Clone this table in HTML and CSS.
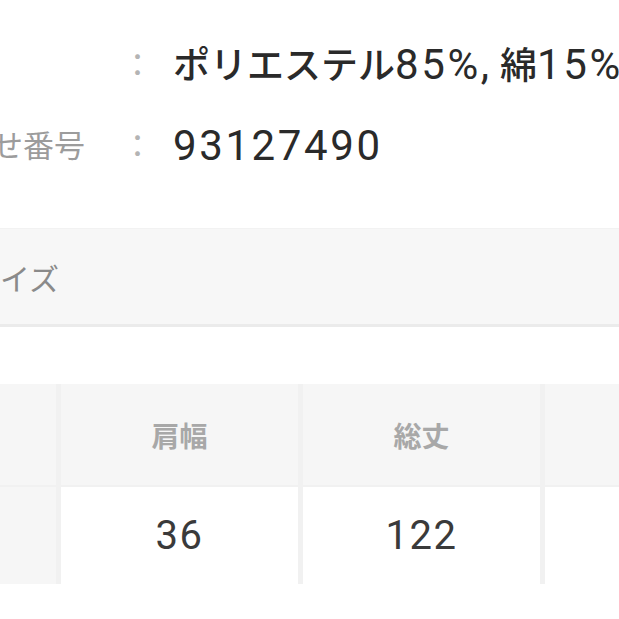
FILE: index.html
```html
<!DOCTYPE html>
<html lang="ja">
<head>
<meta charset="utf-8">
<title>商品詳細</title>
<link rel="stylesheet" href="styles.css">
</head>
<body>
<div class="page">
  <dl class="spec">
    <dt class="spec-label">素材</dt>
    <dd class="spec-colon">：</dd>
    <dd class="spec-value">ポリエステル<span class="num">85%,</span> 綿<span class="num">15%</span></dd>
    <dt class="spec-label">問い合わせ番号</dt>
    <dd class="spec-colon">：</dd>
    <dd class="spec-value"><span class="num">93127490</span></dd>
  </dl>

  <div class="size-head">サイズ</div>

  <div class="size-table">
    <div class="cell head"></div>
    <div class="cell head">肩幅</div>
    <div class="cell head">総丈</div>
    <div class="cell head">身幅</div>
    <div class="cell side"></div>
    <div class="cell val">36</div>
    <div class="cell val">122</div>
    <div class="cell val">50</div>
  </div>
</div>
</body>
</html>
```

FILE: styles.css
```css
html, body {
  margin: 0;
  padding: 0;
  background: #ffffff;
  overflow: hidden;
}

body {
  font-family: "Noto Sans CJK JP", sans-serif;
  color: #333333;
}

.page {
  width: 1000px;
  margin-left: -132px;
}

.spec {
  display: grid;
  grid-template-columns: 254px 51px 1fr;
  grid-auto-rows: 81px;
  align-items: center;
  margin: 0;
  padding-top: 22px;
}

.spec dt,
.spec dd {
  margin: 0;
  white-space: nowrap;
}

.spec-label {
  font-size: 31px;
  color: #9c9c9c;
}

.spec-colon {
  font-size: 31px;
  color: #b4b4b4;
}

.spec-value {
  font-size: 37px;
  font-weight: 500;
  color: #2a2a2a;
}

.num {
  font-family: Roboto, "Liberation Sans", sans-serif;
  font-size: 42px;
  font-weight: 400;
  letter-spacing: 2.6px;
}

.size-head {
  margin-top: 44px;
  height: 95px;
  display: flex;
  align-items: center;
  padding-left: 102px;
  background: #f7f7f7;
  border-top: 1px solid #f2f2f2;
  border-bottom: 3px solid #ebebeb;
  font-size: 30px;
  color: #8a8a8a;
}

.size-table {
  margin-top: 57px;
  display: grid;
  grid-template-columns: 188px 237px 237px 237px;
  grid-template-rows: 101px 97px;
  column-gap: 5px;
  row-gap: 2px;
  background: #f1f1f1;
}

.cell {
  display: flex;
  align-items: center;
  justify-content: center;
}

.head {
  background: #f6f6f6;
  font-size: 28px;
  font-weight: 700;
  color: #a8a8a8;
}

.side {
  background: #f6f6f6;
}

.val {
  background: #ffffff;
  font-family: Roboto, "Liberation Sans", sans-serif;
  font-size: 40px;
  letter-spacing: 1.5px;
  color: #3a3a3a;
}
```
